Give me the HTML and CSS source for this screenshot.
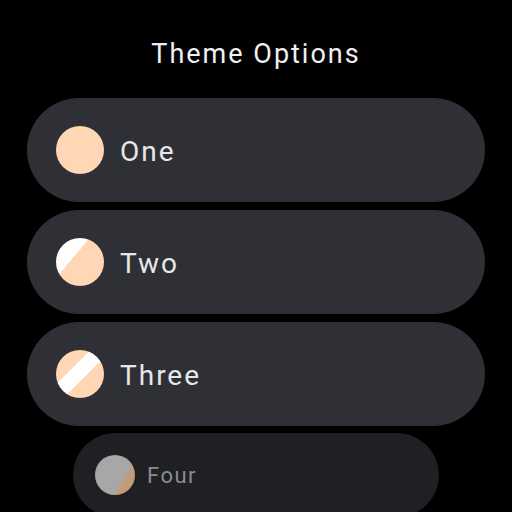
FILE: index.html
```html
<!DOCTYPE html>
<html>
<head>
    <meta charset="utf-8">
    <meta name="viewport" content="width=device-width, initial-scale=1">
    <title>Theme Options</title>
    <link rel="stylesheet" href="styles.css">
</head>
<body>
    <div class="screen">
        <h1 class="title">Theme Options</h1>

        <div class="chip-list">
            <button class="chip">
                <span class="swatch swatch-one"></span>
                <span class="chip-label">One</span>
            </button>
            <button class="chip">
                <span class="swatch swatch-two"></span>
                <span class="chip-label">Two</span>
            </button>
            <button class="chip">
                <span class="swatch swatch-three"></span>
                <span class="chip-label">Three</span>
            </button>
            <button class="chip chip-far">
                <span class="swatch swatch-four"></span>
                <span class="chip-label">Four</span>
            </button>
        </div>
    </div>
</body>
</html>
```

FILE: styles.css
```css
body {
    font-family: Roboto, "Noto Sans", sans-serif;
    background: #000;
    color: #e6e7ea;
    margin: 0;
}
.screen {
    width: 512px;
    height: 512px;
    overflow: hidden;
}
.title {
    margin: 0;
    padding-top: 38px;
    font-size: 27px;
    line-height: 32px;
    font-weight: 400;
    letter-spacing: 2px;
    text-align: center;
    color: #f0f0f2;
}
.chip-list {
    display: flex;
    flex-direction: column;
    align-items: center;
    gap: 8px;
    margin-top: 28px;
}
.chip {
    display: flex;
    align-items: center;
    gap: 16px;
    width: 458px;
    height: 104px;
    flex-shrink: 0;
    padding: 0 0 0 29px;
    box-sizing: border-box;
    border: none;
    border-radius: 52px;
    background: #2f3035;
    color: #e6e7ea;
    font-family: inherit;
    cursor: pointer;
}
.chip-label {
    padding-top: 2px;
    font-size: 28px;
    font-weight: 400;
    letter-spacing: 2px;
}
.swatch {
    width: 48px;
    height: 48px;
    border-radius: 50%;
    flex-shrink: 0;
    background: #ffd7b5;
}
.swatch-two {
    background: linear-gradient(130deg, #fff 38%, #ffd7b5 38%);
}
.swatch-three {
    background: linear-gradient(135deg, #ffd7b5 36%, #fff 36%, #fff 58%, #ffd7b5 58%);
}
.chip-far {
    width: 366px;
    height: 84px;
    border-radius: 42px;
    padding-left: 22px;
    gap: 12px;
    margin-top: -1px;
    background: #1f2024;
    color: #8b8c8f;
}
.chip-far .chip-label {
    padding-top: 0;
    font-size: 22px;
    letter-spacing: 1.5px;
}
.chip-far .swatch {
    width: 40px;
    height: 40px;
}
.swatch-four {
    background: linear-gradient(122deg, #a7a7a7 68%, #c29b7b 68%);
}
```
